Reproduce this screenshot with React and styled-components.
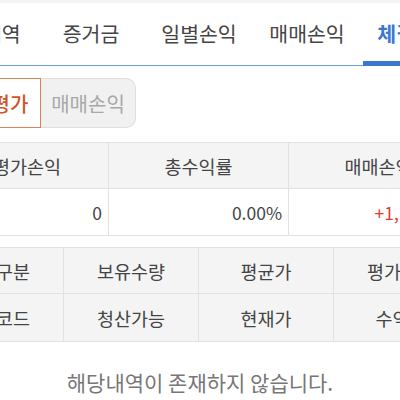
import React from "react";
import styled, { createGlobalStyle } from "styled-components";

const GlobalStyle = createGlobalStyle`
  html, body {
    margin: 0;
    padding: 0;
    background: #ffffff;
    overflow: hidden;
  }
  body {
    font-family: "Noto Sans CJK KR", "Noto Sans", sans-serif;
    color: #444;
  }
`;

const Viewport = styled.div`
  width: 400px;
  height: 400px;
  overflow: hidden;
  border-top: 3px solid #f4f4f4;
  box-sizing: border-box;
`;

const Page = styled.div`
  width: 540px;
  margin-left: -71px;
`;

const TabBar = styled.div`
  display: grid;
  grid-template-columns: repeat(5, 1fr);
  height: 62px;
  border-bottom: 1px solid #6d9fe0;
`;

const Tab = styled.div`
  position: relative;
  display: flex;
  align-items: center;
  justify-content: center;
  padding-bottom: 2px;
  font-size: 20.5px;
  font-weight: ${(p) => (p.$active ? 700 : 400)};
  color: ${(p) => (p.$active ? "#3a78d0" : "#454545")};

  &::after {
    content: "";
    display: ${(p) => (p.$active ? "block" : "none")};
    position: absolute;
    left: 2px;
    right: 0;
    bottom: -1px;
    height: 5px;
    background: #3a78d0;
  }
`;

const Segment = styled.div`
  display: flex;
  margin: 12px 0 0 13px;
  height: 50px;
`;

const SegButton = styled.div`
  display: flex;
  align-items: center;
  justify-content: center;
  box-sizing: border-box;
  font-size: 20px;
  font-weight: ${(p) => (p.$active ? 500 : 400)};
  border: 1px solid ${(p) => (p.$active ? "#d98458" : "#dedede")};
  border-left-width: ${(p) => (p.$active ? "1px" : "0")};
  background: ${(p) => (p.$active ? "#ffffff" : "#f1f1f1")};
  color: ${(p) => (p.$active ? "#d4551f" : "#a8a8a8")};
  border-radius: ${(p) => (p.$active ? "0" : "0 10px 10px 0")};
  width: ${(p) => (p.$active ? "99px" : "95px")};
`;

const Table = styled.div`
  display: grid;
  grid-template-columns: repeat(${(p) => p.$cols}, 1fr);
  margin-top: ${(p) => p.$top}px;
  border-top: 1px solid #e2e2e2;
`;

const Cell = styled.div`
  display: flex;
  align-items: center;
  justify-content: ${(p) => (p.$align === "right" ? "flex-end" : "center")};
  height: ${(p) => p.$h || 46}px;
  padding: 0 ${(p) => (p.$align === "right" ? "6px" : "0")};
  box-sizing: border-box;
  font-size: ${(p) => (p.$head ? "18.5px" : "17.5px")};
  font-weight: 400;
  background: ${(p) => (p.$head ? "#f4f4f4" : "#ffffff")};
  color: ${(p) => p.$color || "#444444"};
  border-bottom: 1px solid #e2e2e2;
  border-right: 1px solid #e2e2e2;
`;

const Empty = styled.div`
  width: 400px;
  margin: 25px 0 0 71px;
  text-align: center;
  font-size: 21px;
  font-weight: 400;
  color: #777777;
`;

const tabs = ["주문내역", "증거금", "일별손익", "매매손익", "체결내역"];

const summaryHead = ["총평가손익", "총수익률", "매매손익"];
const summaryData = [
  { v: "0" },
  { v: "0.00%" },
  { v: "+1,125,000", color: "#e03a2f" },
];

const listHead = [
  ["종목구분", "보유수량", "평균가", "평가손익"],
  ["종목코드", "청산가능", "현재가", "수익률"],
];

export default function App() {
  return (
    <Viewport>
      <GlobalStyle />
      <Page>
        <TabBar>
          {tabs.map((t, i) => (
            <Tab key={t} $active={i === 4}>
              {t}
            </Tab>
          ))}
        </TabBar>

        <Segment>
          <SegButton $active>잔고평가</SegButton>
          <SegButton>매매손익</SegButton>
        </Segment>

        <Table $cols={3} $top={14}>
          {summaryHead.map((h) => (
            <Cell key={h} $head>
              {h}
            </Cell>
          ))}
          {summaryData.map((d) => (
            <Cell key={d.v} $align="right" $h={47} $color={d.color}>
              {d.v}
            </Cell>
          ))}
        </Table>

        <Table $cols={4} $top={11}>
          {listHead.flat().map((h, i) => (
            <Cell key={h} $head $h={i < 4 ? 46 : 48}>
              {h}
            </Cell>
          ))}
        </Table>

        <Empty>해당내역이 존재하지 않습니다.</Empty>
      </Page>
    </Viewport>
  );
}
